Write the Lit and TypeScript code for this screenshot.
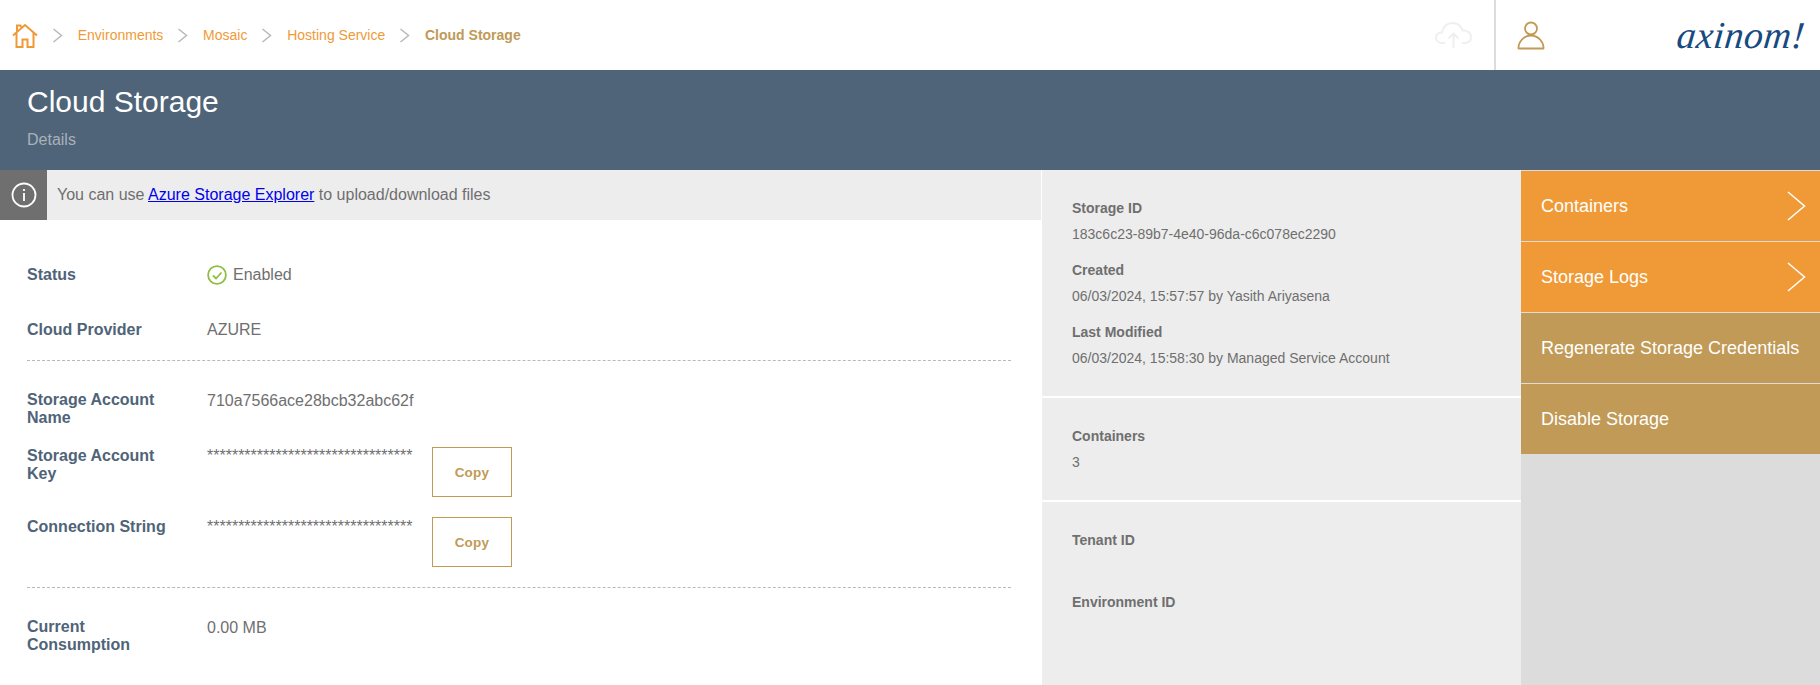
import { LitElement, html, css } from "lit";
import { customElement } from "lit/decorators.js";

const chevron = html`<svg class="crumb-sep" width="11" height="15" viewBox="0 0 11 15"><path d="M1.500 1l8 6.500-8 6.500" fill="none" stroke="#b9b9b9" stroke-width="1.500"/></svg>`;
const bigChevron = html`<svg class="big-chev" width="19" height="30" viewBox="0 0 19 30"><path d="M1 1l16.500 14L1 29" fill="none" stroke="#fff" stroke-width="1.500"/></svg>`;

@customElement("app-root")
export class AppRoot extends LitElement {
  static styles = css`
    :host { display: block; width: 1820px; height: 685px; overflow: hidden; background: #fff; font-family: "Liberation Sans", Arial, sans-serif; font-size: 16px; line-height: 18px; color: #6f6f6f; }
    * { box-sizing: border-box; }
    .top { height: 70px; display: flex; align-items: center; padding-left: 12px; background: #fff; }
    .crumbs { display: flex; align-items: center; font-size: 14px; color: #ef9a37; }
    .home { display: block; }
    .crumb-sep { display: block; margin: 0 14.75px 0 14px; }
    .crumb-cur { font-weight: 700; color: #c09a56; }
    .tools { margin-left: auto; display: flex; align-items: center; height: 70px; }
    .cloud { display: block; margin-right: 22px; }
    .divider { width: 2px; height: 70px; background: #dcdcdc; }
    .user { display: block; margin: 0 1px 0 21px; }
    .logo { width: 274px; display: flex; justify-content: flex-end; padding-right: 15px; }
    .logo span { display: block; transform: skewX(-6deg); font-family: "Liberation Serif", serif; font-style: italic; font-size: 38px; line-height: 50px; color: #174a80; letter-spacing: .5px; }
    .title { height: 100px; background: #4f6478; padding: 15px 27px 0; }
    .title h1 { margin: 0; font-size: 30px; line-height: 34px; font-weight: 400; color: #fff; }
    .title p { margin: 12px 0 0; font-size: 16px; line-height: 18px; color: #a9b1ba; }
    .main { display: flex; height: 515px; }
    .left { width: 1041px; margin-right: 1px; flex: none; }
    .notice { height: 50px; background: #ededed; display: flex; align-items: center; }
    .notice-ic { width: 47px; height: 50px; background: #6f6f6f; display: flex; align-items: center; justify-content: center; }
    .notice span { margin-left: 10px; }
    .notice a { color: #0000ee; text-decoration: underline; }
    .form { padding: 46px 30px 0 27px; }
    .row { display: flex; align-items: flex-start; }
    .lab { width: 180px; flex: none; font-weight: 700; color: #4f6478; }
    .lab.low { margin-top: 1px; }
    .val { display: flex; align-items: center; gap: 6px; }
    .val.low { margin-top: 1px; }
    .check { display: block; margin: -1px 0; }
    .mask { width: 225px; flex: none; height: 18px; }
    .mask.low { margin-top: 1px; }
    .copy { width: 80px; height: 50px; border: 1px solid #c09a56; background: #fff; color: #c09a56; font: 700 13.5px "Liberation Sans", Arial, sans-serif; letter-spacing: .25px; padding: 0; }
    .mt37 { margin-top: 37px; }
    .mt20 { margin-top: 20px; }
    .rule { border-top: 1px dashed #b9b9b9; }
    .r1 { margin-top: 21px; margin-bottom: 30px; }
    .r2 { margin-top: 20px; margin-bottom: 30px; }
    .mid { width: 479px; flex: none; display: flex; flex-direction: column; gap: 2px; }
    .sec { background: #ededed; padding: 29px 30px 0; font-size: 14px; color: #6f6f6f; }
    .s1 { height: 226px; }
    .s2 { height: 102px; }
    .s3 { flex: 1; }
    .sec b { display: block; font-weight: 700; margin-bottom: 8px; }
    .sec div { min-height: 18px; margin-bottom: 18px; }
    .side { flex: 1; background: #dcdcdc; padding-top: 1px; }
    .act { height: 70px; margin-bottom: 1px; display: flex; align-items: center; justify-content: space-between; padding: 0 14px 0 20px; color: #fff; font-size: 18px; background: #c09a56; }
    .act.on { background: #ef9a37; }
  `;

  render() {
    const mask = "*".repeat(33);
    return html`
      <div class="top">
        <div class="crumbs">
          <svg class="home" width="26" height="25" viewBox="0 0 26 25" fill="none" stroke="#ef9a37" stroke-width="2"><path d="M1 12.500L13 2l12 10.500M4.500 10v14h6v-7.500h5V24h6V10M5 9V2.500h3.500l1 2.500"/></svg>
          ${chevron}<span>Environments</span>${chevron}<span>Mosaic</span>${chevron}<span>Hosting Service</span>${chevron}<span class="crumb-cur">Cloud Storage</span>
        </div>
        <div class="tools">
          <svg class="cloud" width="37" height="26" viewBox="0 0 37 26" fill="none" stroke="#efefef" stroke-width="2"><path d="M10 21H7.500C3.500 21 1 18.500 1 15.500S3.500 10 7 10.500C7.500 5 12 1 17.500 1c5 0 8.500 3 10 7.500 4.500-.5 8.500 2.500 8.500 6.500s-3 6-7 6h-2"/><path d="M18.500 26V12M13.500 16.500l5-5 5 5"/></svg>
          <div class="divider"></div>
          <svg class="user" width="28" height="29" viewBox="0 0 28 29" fill="none" stroke="#c09a56" stroke-width="1.800"><circle cx="14" cy="7.500" r="6"/><path d="M1.500 27.500h25c.500-6-5-13-12.500-13S1 21.500 1.500 27.500z" stroke-linejoin="round"/></svg>
          <div class="logo"><span>axinom!</span></div>
        </div>
      </div>
      <div class="title"><h1>Cloud Storage</h1><p>Details</p></div>
      <div class="main">
        <div class="left">
          <div class="notice">
            <div class="notice-ic"><svg width="26" height="26" viewBox="0 0 26 26" fill="none" stroke="#fff"><circle cx="13" cy="13" r="11.500" stroke-width="1.800"/><path d="M13 11v8" stroke-width="1.800"/><path d="M13 7v2" stroke-width="1.800"/></svg></div>
            <span>You can use <a href="#">Azure Storage Explorer</a> to upload/download files</span>
          </div>
          <div class="form">
            <div class="row"><div class="lab">Status</div><div class="val"><svg class="check" width="20" height="20" viewBox="0 0 20 20" fill="none" stroke="#8fbe45" stroke-width="1.800"><circle cx="10" cy="10" r="8.900"/><path d="M6 10.500l3 3 5.500-6"/></svg>Enabled</div></div>
            <div class="row mt37"><div class="lab">Cloud Provider</div><div class="val">AZURE</div></div>
            <div class="rule r1"></div>
            <div class="row"><div class="lab">Storage Account<br />Name</div><div class="val low">710a7566ace28bcb32abc62f</div></div>
            <div class="row mt20"><div class="lab">Storage Account<br />Key</div><div class="mask">${mask}</div><button class="copy">Copy</button></div>
            <div class="row mt20"><div class="lab low">Connection String</div><div class="mask low">${mask}</div><button class="copy">Copy</button></div>
            <div class="rule r2"></div>
            <div class="row"><div class="lab">Current<br />Consumption</div><div class="val low">0.00 MB</div></div>
          </div>
        </div>
        <div class="mid">
          <section class="sec s1">
            <b>Storage ID</b><div>183c6c23-89b7-4e40-96da-c6c078ec2290</div>
            <b>Created</b><div>06/03/2024, 15:57:57 by Yasith Ariyasena</div>
            <b>Last Modified</b><div>06/03/2024, 15:58:30 by Managed Service Account</div>
          </section>
          <section class="sec s2"><b>Containers</b><div>3</div></section>
          <section class="sec s3"><b>Tenant ID</b><div></div><b>Environment ID</b><div></div></section>
        </div>
        <div class="side">
          <div class="act on"><span>Containers</span>${bigChevron}</div>
          <div class="act on"><span>Storage Logs</span>${bigChevron}</div>
          <div class="act"><span>Regenerate Storage Credentials</span></div>
          <div class="act"><span>Disable Storage</span></div>
        </div>
      </div>
    `;
  }
}
